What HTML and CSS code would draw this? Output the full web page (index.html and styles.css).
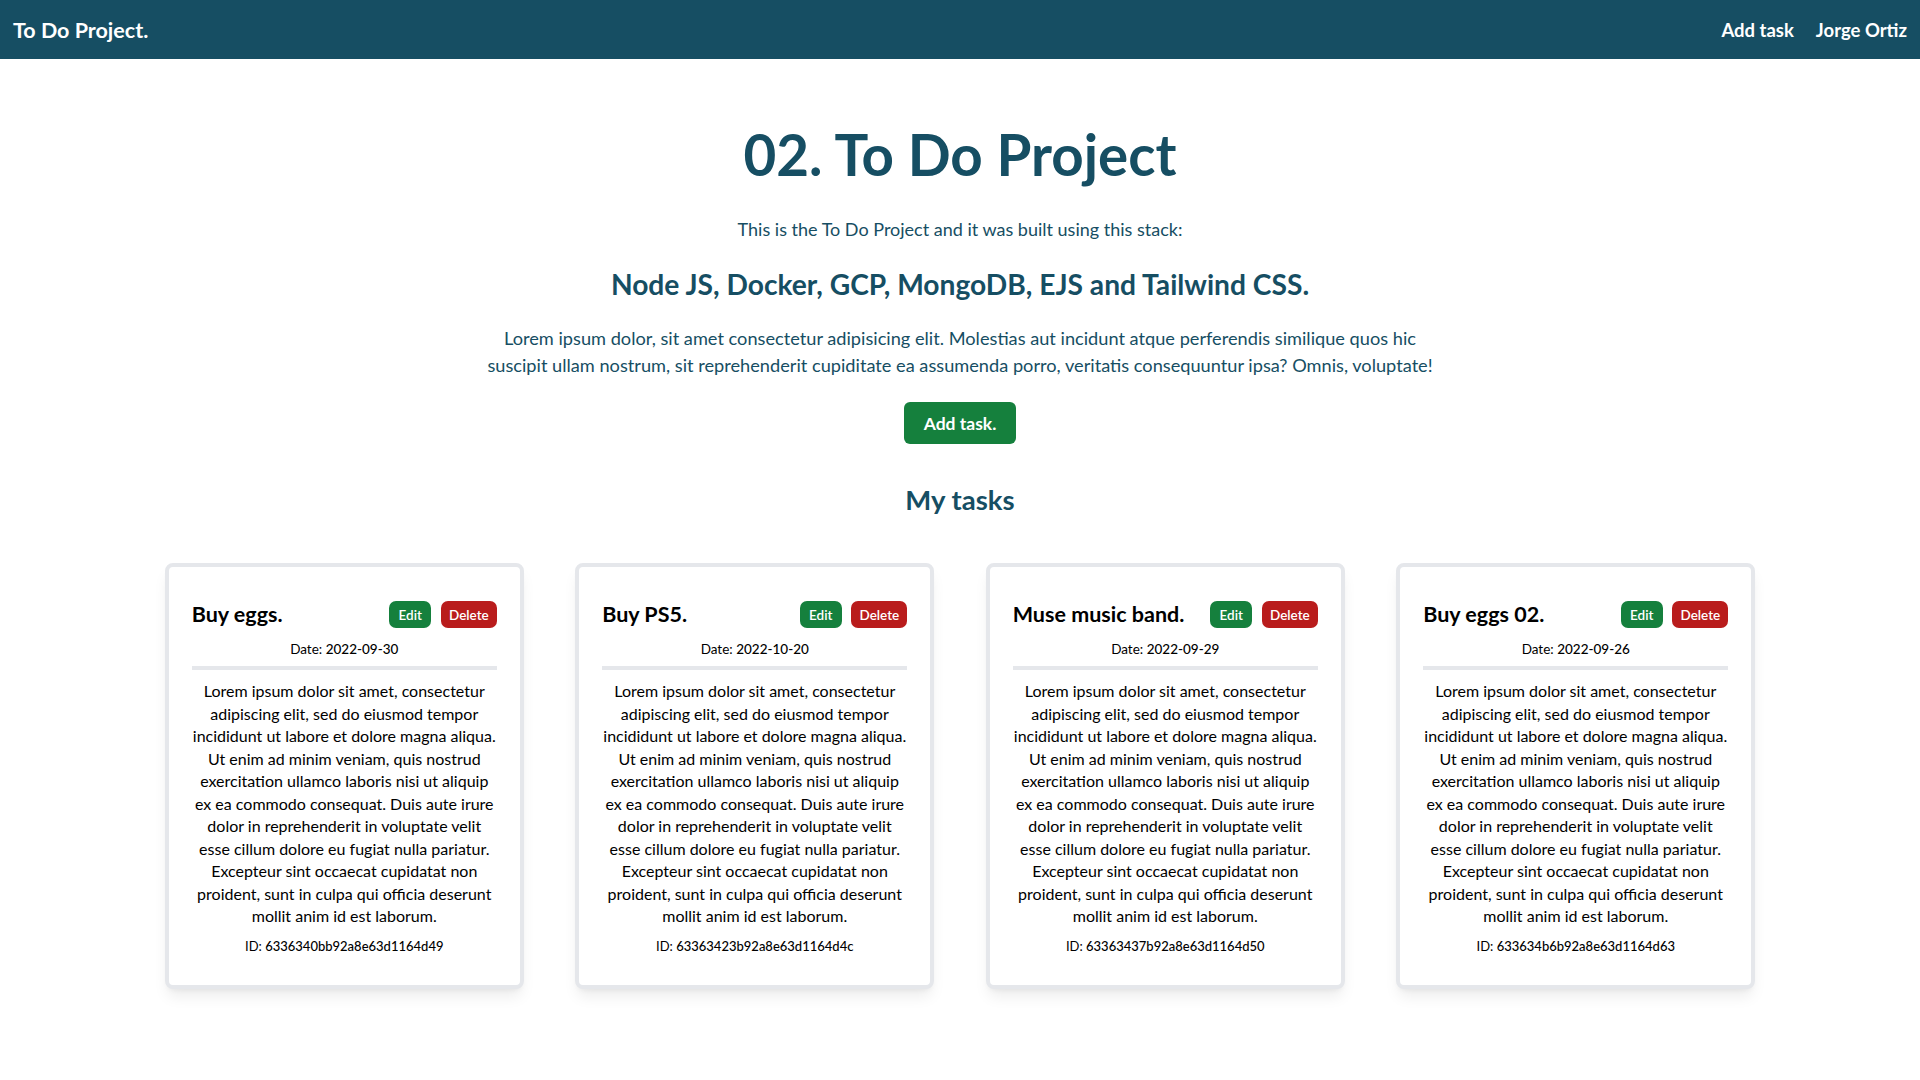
FILE: index.html
```html
<!DOCTYPE html>
<html lang="en">
<head>
<meta charset="utf-8">
<title>To Do Project</title>
<link rel="stylesheet" href="styles.css">
</head>
<body>
<nav class="navbar">
  <a class="brand" href="#">To Do Project.</a>
  <div class="nav-links">
    <a href="#">Add task</a>
    <a href="#">Jorge Ortiz</a>
  </div>
</nav>
<main class="main">
  <h1 class="title">02. To Do Project</h1>
  <p class="intro">This is the To Do Project and it was built using this stack:</p>
  <h2 class="stack">Node JS, Docker, GCP, MongoDB, EJS and Tailwind CSS.</h2>
  <p class="lead">Lorem ipsum dolor, sit amet consectetur adipisicing elit. Molestias aut incidunt atque perferendis similique quos hic suscipit ullam nostrum, sit reprehenderit cupiditate ea assumenda porro, veritatis consequuntur ipsa? Omnis, voluptate!</p>
  <a class="btn-add" href="#">Add task.</a>
  <h3 class="section-title">My tasks</h3>
  <div class="cards">
    <div class="card">
      <div class="card-head">
        <span class="card-title">Buy eggs.</span>
        <div class="actions"><a class="btn btn-edit" href="#">Edit</a><a class="btn btn-delete" href="#">Delete</a></div>
      </div>
      <p class="date">Date: <span class="val">2022-09-30</span></p>
      <hr class="divider">
      <p class="desc">Lorem ipsum dolor sit amet, consectetur adipiscing elit, sed do eiusmod tempor incididunt ut labore et dolore magna aliqua. Ut enim ad minim veniam, quis nostrud exercitation ullamco laboris nisi ut aliquip ex ea commodo consequat. Duis aute irure dolor in reprehenderit in voluptate velit esse cillum dolore eu fugiat nulla pariatur. Excepteur sint occaecat cupidatat non proident, sunt in culpa qui officia deserunt mollit anim id est laborum.</p>
      <p class="id">ID: <span class="val">6336340bb92a8e63d1164d49</span></p>
    </div>
    <div class="card">
      <div class="card-head">
        <span class="card-title">Buy PS5.</span>
        <div class="actions"><a class="btn btn-edit" href="#">Edit</a><a class="btn btn-delete" href="#">Delete</a></div>
      </div>
      <p class="date">Date: <span class="val">2022-10-20</span></p>
      <hr class="divider">
      <p class="desc">Lorem ipsum dolor sit amet, consectetur adipiscing elit, sed do eiusmod tempor incididunt ut labore et dolore magna aliqua. Ut enim ad minim veniam, quis nostrud exercitation ullamco laboris nisi ut aliquip ex ea commodo consequat. Duis aute irure dolor in reprehenderit in voluptate velit esse cillum dolore eu fugiat nulla pariatur. Excepteur sint occaecat cupidatat non proident, sunt in culpa qui officia deserunt mollit anim id est laborum.</p>
      <p class="id">ID: <span class="val">63363423b92a8e63d1164d4c</span></p>
    </div>
    <div class="card">
      <div class="card-head">
        <span class="card-title">Muse music band.</span>
        <div class="actions"><a class="btn btn-edit" href="#">Edit</a><a class="btn btn-delete" href="#">Delete</a></div>
      </div>
      <p class="date">Date: <span class="val">2022-09-29</span></p>
      <hr class="divider">
      <p class="desc">Lorem ipsum dolor sit amet, consectetur adipiscing elit, sed do eiusmod tempor incididunt ut labore et dolore magna aliqua. Ut enim ad minim veniam, quis nostrud exercitation ullamco laboris nisi ut aliquip ex ea commodo consequat. Duis aute irure dolor in reprehenderit in voluptate velit esse cillum dolore eu fugiat nulla pariatur. Excepteur sint occaecat cupidatat non proident, sunt in culpa qui officia deserunt mollit anim id est laborum.</p>
      <p class="id">ID: <span class="val">63363437b92a8e63d1164d50</span></p>
    </div>
    <div class="card">
      <div class="card-head">
        <span class="card-title">Buy eggs 02.</span>
        <div class="actions"><a class="btn btn-edit" href="#">Edit</a><a class="btn btn-delete" href="#">Delete</a></div>
      </div>
      <p class="date">Date: <span class="val">2022-09-26</span></p>
      <hr class="divider">
      <p class="desc">Lorem ipsum dolor sit amet, consectetur adipiscing elit, sed do eiusmod tempor incididunt ut labore et dolore magna aliqua. Ut enim ad minim veniam, quis nostrud exercitation ullamco laboris nisi ut aliquip ex ea commodo consequat. Duis aute irure dolor in reprehenderit in voluptate velit esse cillum dolore eu fugiat nulla pariatur. Excepteur sint occaecat cupidatat non proident, sunt in culpa qui officia deserunt mollit anim id est laborum.</p>
      <p class="id">ID: <span class="val">633634b6b92a8e63d1164d63</span></p>
    </div>
  </div>
</main>
</body>
</html>
```
FILE: styles.css
```css
* { box-sizing: border-box; }
html, body { margin: 0; padding: 0; }
body {
  font-family: Lato, "Open Sans", "Liberation Sans", sans-serif;
  background: #ffffff;
  color: #000;
}
a { text-decoration: none; }

.navbar {
  height: 59px;
  background: #164e63;
  display: flex;
  align-items: center;
  justify-content: space-between;
  padding: 0 13px;
}
.brand {
  color: #fff;
  font-size: 21.5px;
  font-weight: 700;
  line-height: 28px;
}
.nav-links {
  display: flex;
  gap: 22px;
}
.nav-links a {
  color: #fff;
  font-size: 18.5px;
  font-weight: 700;
  line-height: 24px;
}

.main {
  display: flex;
  flex-direction: column;
  align-items: center;
  text-align: center;
  color: #164e63;
  padding-bottom: 80px;
}
.title {
  margin: 65px 0 0;
  font-size: 56.5px;
  line-height: 60px;
  font-weight: 700;
}
.intro {
  margin: 33px 0 0;
  font-size: 18px;
  line-height: 24px;
  font-weight: 400;
}
.stack {
  margin: 25px 0 0;
  font-size: 28.2px;
  line-height: 36px;
  font-weight: 700;
}
.lead {
  margin: 23px 0 0;
  max-width: 968px;
  font-size: 18.2px;
  line-height: 27px;
  font-weight: 400;
}
.btn-add {
  margin-top: 23px;
  height: 42px;
  padding: 0 20px;
  display: inline-flex;
  align-items: center;
  background: #15803d;
  color: #fff;
  font-size: 17.5px;
  font-weight: 700;
  border-radius: 6px;
}
.section-title {
  margin: 40px 0 0;
  font-size: 27.5px;
  line-height: 32px;
  font-weight: 700;
}

.cards {
  margin-top: 47px;
  display: flex;
  justify-content: center;
  gap: 51.5px;
}
.card {
  width: 359px;
  border: 4px solid #e5e7eb;
  border-radius: 8px;
  background: #fff;
  padding: 34px 23px 30px;
  color: #000;
  box-shadow: 0 10px 15px -3px rgba(0,0,0,0.08), 0 4px 6px -4px rgba(0,0,0,0.08);
}
.card-head {
  display: flex;
  align-items: center;
  justify-content: space-between;
  height: 27px;
}
.card-title {
  font-size: 21.5px;
  font-weight: 700;
  line-height: 27px;
}
.actions {
  display: flex;
  gap: 9.5px;
}
.btn {
  height: 27px;
  display: inline-flex;
  align-items: center;
  padding: 0 9.5px;
  border-radius: 7px;
  color: #fff;
  font-size: 13.5px;
  font-weight: 600;
}
.btn-edit { background: #15803d; }
.btn-delete { background: #b91c1c; padding: 0 8px; }

.date {
  margin: 11px 0 0;
  font-size: 13.5px;
  line-height: 20px;
}
.divider {
  margin: 7px 0 0;
  height: 4px;
  border: 0;
  background: #e5e7eb;
}
.desc {
  margin: 10px 0 0;
  font-size: 16px;
  line-height: 22.5px;
}
.id {
  margin: 9px 0 0;
  font-size: 13px;
  line-height: 18px;
}
.val { font-weight: 500; }
```
